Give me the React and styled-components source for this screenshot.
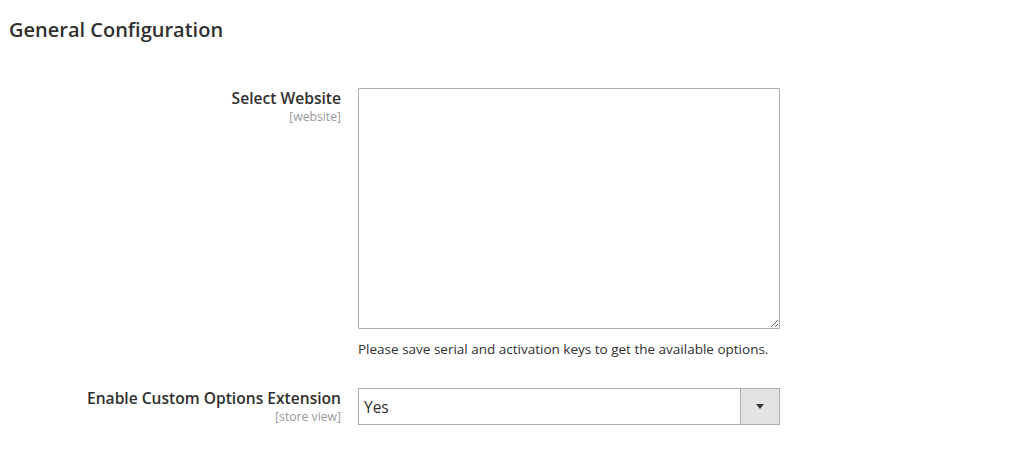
import React from "react";
import styled, { createGlobalStyle } from "styled-components";

const GlobalStyle = createGlobalStyle`
  body {
    margin: 0;
    background: #fff;
    font-family: "Open Sans", "Noto Sans", sans-serif;
    color: #303030;
  }
`;

const Page = styled.div`
  padding: 16px 9px 0;
`;

const Title = styled.h2`
  margin: 0 0 44px;
  font-size: 20px;
  font-weight: 600;
  line-height: 28px;
  color: #303030;
`;

const Form = styled.div`
  display: grid;
  grid-template-columns: 332px 422px;
  column-gap: 17px;
  row-gap: 30px;
  align-items: start;
`;

const Label = styled.div`
  text-align: right;
`;

const LabelText = styled.div`
  font-size: 15.6px;
  font-weight: 600;
  line-height: 21px;
  color: #303030;
`;

const Scope = styled.div`
  font-size: 12.2px;
  line-height: 16px;
  color: #999;
`;

const Control = styled.div`
  display: flex;
  flex-direction: column;
`;

const TextArea = styled.textarea`
  box-sizing: border-box;
  width: 422px;
  height: 241px;
  margin: 0;
  border: 1px solid #adadad;
  border-radius: 1px;
  background: #fff;
  resize: vertical;
  font-family: inherit;
  font-size: 14px;
  outline: none;
  display: block;
`;

const Note = styled.div`
  margin-top: 11px;
  font-size: 13.5px;
  line-height: 18px;
  color: #303030;
`;

const SelectBox = styled.div`
  box-sizing: border-box;
  width: 422px;
  height: 37px;
  border: 1px solid #adadad;
  display: flex;
  align-items: stretch;
  background: #fff;
`;

const SelectValue = styled.div`
  flex: 1;
  display: flex;
  align-items: center;
  padding-left: 5px;
  font-size: 15.5px;
  color: #303030;
`;

const ArrowBox = styled.div`
  width: 38px;
  border-left: 1px solid #adadad;
  background: #e3e3e3;
  display: flex;
  align-items: center;
  justify-content: center;
`;

const Arrow = styled.span`
  width: 0;
  height: 0;
  border-left: 4px solid transparent;
  border-right: 4px solid transparent;
  border-top: 5px solid #41362f;
`;

export default function App() {
  return (
    <>
      <GlobalStyle />
      <Page>
        <Title>General Configuration</Title>
        <Form>
          <Label>
            <LabelText>Select Website</LabelText>
            <Scope>[website]</Scope>
          </Label>
          <Control>
            <TextArea />
            <Note>Please save serial and activation keys to get the available options.</Note>
          </Control>
          <Label>
            <LabelText>Enable Custom Options Extension</LabelText>
            <Scope>[store view]</Scope>
          </Label>
          <Control>
            <SelectBox>
              <SelectValue>Yes</SelectValue>
              <ArrowBox>
                <Arrow />
              </ArrowBox>
            </SelectBox>
          </Control>
        </Form>
      </Page>
    </>
  );
}
